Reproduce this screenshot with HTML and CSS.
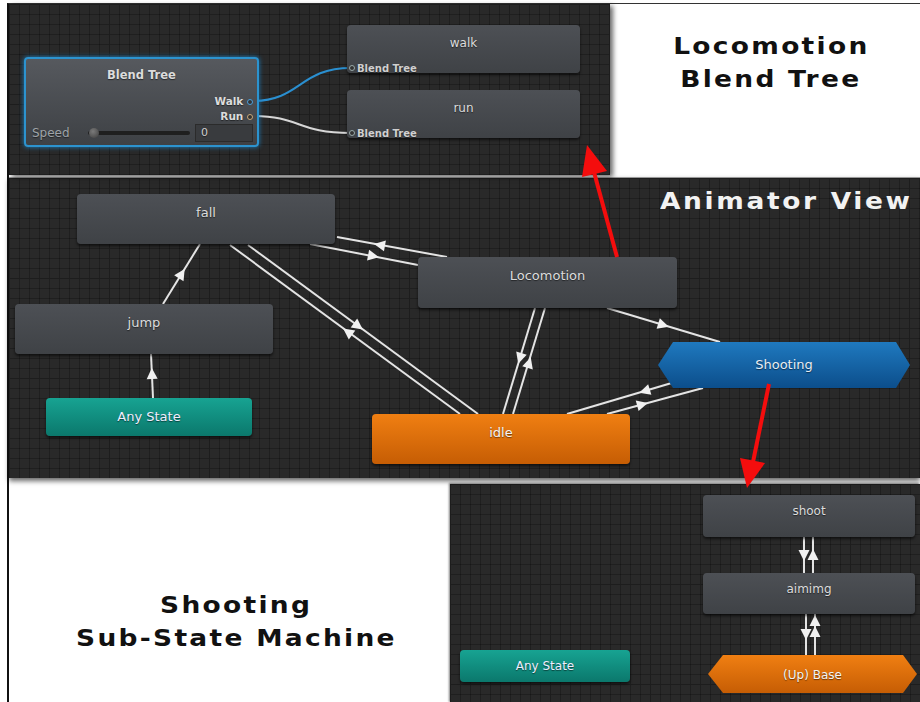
FILE: index.html
```html
<!DOCTYPE html>
<html lang="en">
<head>
  <meta charset="UTF-8">
  <title>Animator View</title>
  <link rel="stylesheet" href="styles.css">
</head>
<body>
  <div class="sheet">
    <div class="frame">

      <!-- 上段: Blend Tree -->
      <div class="row-top">
        <section class="panel grid blend-panel">
          <svg class="wires" width="601" height="171" viewBox="0 0 601 171">
            <path d="M243 97 C292 97 290 64 342 64" stroke="#2a8fd0" stroke-width="2" fill="none"/>
            <path d="M243 112 C292 112 288 129 342 129" stroke="#d6d6d6" stroke-width="2" fill="none"/>
          </svg>

          <div class="node blend">
            <div class="node-title">Blend Tree</div>
            <div class="outs">
              <div>Walk <i class="port port-blue"></i></div>
              <div>Run <i class="port port-warm"></i></div>
            </div>
            <div class="speed-row">
              <span class="speed-label">Speed</span>
              <div class="slider"><i class="knob"></i></div>
              <div class="field">0</div>
            </div>
          </div>

          <div class="node clip n-walk">
            <div class="node-title">walk</div>
            <div class="in-label"><i class="port"></i>Blend Tree</div>
          </div>
          <div class="node clip n-run">
            <div class="node-title">run</div>
            <div class="in-label"><i class="port"></i>Blend Tree</div>
          </div>
        </section>

        <div class="caption caption-top"><span>Locomotion</span><span>Blend Tree</span></div>
      </div>

      <!-- 中段: Animator View -->
      <section class="panel grid view">
        <svg class="wires" width="911" height="300" viewBox="0 0 911 300">
          <defs>
            <path id="tri-a" d="M6 0 L-5 -5.5 L-5 5.5 Z" fill="#f0f0f0"/>
          </defs>
          <g stroke="#e4e4e4" stroke-width="2" fill="none">
            <line x1="154" y1="126" x2="191" y2="66"/>
            <line x1="144" y1="220" x2="142" y2="176"/>
            <line x1="328" y1="59" x2="438" y2="79"/>
            <line x1="301" y1="66" x2="409" y2="87"/>
            <line x1="221" y1="67" x2="451" y2="236"/>
            <line x1="239" y1="67" x2="469" y2="236"/>
            <line x1="526" y1="130" x2="494" y2="236"/>
            <line x1="536" y1="130" x2="504" y2="236"/>
            <line x1="598" y1="130" x2="711" y2="164"/>
            <line x1="558" y1="236" x2="666" y2="204"/>
            <line x1="598" y1="236" x2="694" y2="210"/>
          </g>
          <use href="#tri-a" transform="translate(172.5 96) rotate(-58)"/>
          <use href="#tri-a" transform="translate(143 196) rotate(-92)"/>
          <use href="#tri-a" transform="translate(371 67) rotate(190)"/>
          <use href="#tri-a" transform="translate(364 78) rotate(11)"/>
          <use href="#tri-a" transform="translate(339 154) rotate(216)"/>
          <use href="#tri-a" transform="translate(349 148) rotate(36)"/>
          <use href="#tri-a" transform="translate(511 180) rotate(107)"/>
          <use href="#tri-a" transform="translate(520 185) rotate(-73)"/>
          <use href="#tri-a" transform="translate(654 147) rotate(17)"/>
          <use href="#tri-a" transform="translate(636 213) rotate(163)"/>
          <use href="#tri-a" transform="translate(633 226.5) rotate(-15)"/>
        </svg>

        <div class="view-title">Animator View</div>

        <div class="node n-fall"><div class="node-title">fall</div></div>
        <div class="node n-jump"><div class="node-title">jump</div></div>
        <div class="node n-loco"><div class="node-title">Locomotion</div></div>
        <div class="node teal n-any"><div class="node-title">Any State</div></div>
        <div class="node orange n-idle"><div class="node-title">idle</div></div>
        <div class="node hex blue n-shooting"><div class="node-title">Shooting</div></div>
      </section>

      <!-- 下段: Sub-State Machine -->
      <div class="row-bottom">
        <div class="caption caption-bottom"><span>Shooting</span><span>Sub-State Machine</span></div>

        <section class="panel grid sub">
          <svg class="wires" width="470" height="218" viewBox="0 0 470 218">
            <defs>
              <path id="tri-b" d="M6 0 L-5 -5.5 L-5 5.5 Z" fill="#f0f0f0"/>
            </defs>
            <g stroke="#e4e4e4" stroke-width="2" fill="none">
              <line x1="354" y1="53" x2="354" y2="89"/>
              <line x1="363" y1="53" x2="363" y2="89"/>
              <line x1="356" y1="130" x2="356" y2="171"/>
              <line x1="365" y1="130" x2="365" y2="171"/>
            </g>
            <use href="#tri-b" transform="translate(354 71) rotate(90)"/>
            <use href="#tri-b" transform="translate(363 71) rotate(-90)"/>
            <use href="#tri-b" transform="translate(356 150) rotate(90)"/>
            <use href="#tri-b" transform="translate(365 137) rotate(-90)"/>
            <use href="#tri-b" transform="translate(365 148) rotate(-90)"/>
          </svg>

          <div class="node small n-shoot"><div class="node-title">shoot</div></div>
          <div class="node small n-aim"><div class="node-title">aimimg</div></div>
          <div class="node small teal n-any2"><div class="node-title">Any State</div></div>
          <div class="node small hex orange n-base"><div class="node-title">(Up) Base</div></div>
        </section>
      </div>
    </div>

    <!-- 赤い矢印 -->
    <svg class="callouts" width="920" height="702" viewBox="0 0 920 702">
      <g fill="#f40d0d" stroke="#f40d0d">
        <line x1="617" y1="257" x2="594" y2="172" stroke-width="4"/>
        <polygon points="587,145 607,171 582,177" stroke="none"/>
        <line x1="769" y1="384" x2="753" y2="462" stroke-width="4"/>
        <polygon points="747,488 765,463 740,458" stroke="none"/>
      </g>
    </svg>
  </div>
</body>
</html>
```

FILE: styles.css
```css
body {
  margin: 0;
  background: #fff;
  font-family: "DejaVu Sans", Verdana, sans-serif;
}
.sheet {
  position: relative;
  width: 920px;
  height: 702px;
  overflow: hidden;
  padding: 3px 0 0 7px;
  box-sizing: border-box;
}
.frame {
  height: 699px;
  border-top: 1px solid #333;
  border-left: 2px solid #111;
  display: flex;
  flex-direction: column;
}

/* グリッド背景 */
.grid {
  background-color: #292929;
  background-image:
    linear-gradient(#1d1d1d 1px, transparent 1px),
    linear-gradient(90deg, #1d1d1d 1px, transparent 1px),
    linear-gradient(rgba(0, 0, 0, 0.25) 1px, transparent 1px),
    linear-gradient(90deg, rgba(0, 0, 0, 0.25) 1px, transparent 1px);
  background-size: 100px 100px, 100px 100px, 10px 10px, 10px 10px;
}
.panel {
  position: relative;
  overflow: hidden;
}
.wires {
  position: absolute;
  left: 0;
  top: 0;
}

/* 段 */
.row-top {
  display: flex;
  height: 171px;
}
.blend-panel {
  width: 601px;
  box-shadow: 3px 2px 5px rgba(0, 0, 0, 0.6);
  z-index: 2;
}
.view {
  margin-top: 2px;
  height: 300px;
  box-shadow: 0 3px 5px rgba(0, 0, 0, 0.6);
  border-top: 1px solid #9a9a9a;
  z-index: 1;
}
.row-bottom {
  display: flex;
  margin-top: 6px;
  flex: 1;
}
.sub {
  flex: 1;
  box-shadow: -1px -1px 2px rgba(0, 0, 0, 0.5);
}

/* キャプション (幅広の書体を横に伸ばして近づける) */
.caption {
  display: flex;
  flex-direction: column;
  align-items: center;
  font-weight: bold;
  font-size: 23px;
  letter-spacing: 2px;
  line-height: 33px;
  color: #111;
}
.caption span {
  display: block;
  white-space: nowrap;
  transform: scaleX(1.15);
}
.caption-top {
  flex: 1;
  padding: 26px 0 0 12px;
}
.caption-bottom {
  width: 441px;
  padding-top: 105px;
  padding-left: 14px;
  box-sizing: border-box;
}
.view-title {
  position: absolute;
  left: 651px;
  top: 10px;
  font-weight: bold;
  font-size: 23px;
  letter-spacing: 2.3px;
  color: #f2f2f2;
  white-space: nowrap;
  transform: scaleX(1.15);
  transform-origin: left center;
}

/* ノード */
.node {
  position: absolute;
  box-sizing: border-box;
  display: flex;
  flex-direction: column;
  border-radius: 4px;
  background: linear-gradient(#4d5055, #3f4246);
  box-shadow: 0 2px 3px rgba(0, 0, 0, 0.6);
  color: #dcdcdc;
  font-size: 13px;
  text-shadow: 0 1px 1px rgba(0, 0, 0, 0.5);
}
.node-title {
  padding-top: 12px;
  line-height: 14px;
  text-align: center;
}
.node.small {
  font-size: 12px;
}
.node.small .node-title {
  padding-top: 9px;
}
.teal {
  background: linear-gradient(#17a392, #0b786c);
  color: #eef;
}
.orange {
  background: linear-gradient(#f07f12, #c65d04);
  color: #f4f4f4;
}
.blue {
  background: linear-gradient(#1f79bf, #0c4e8b);
  color: #e8eef4;
}
.hex {
  border-radius: 0;
  justify-content: center;
  clip-path: polygon(15px 0, calc(100% - 14px) 0, 100% 50%, calc(100% - 14px) 100%, 15px 100%, 0 50%);
}
.hex .node-title,
.node.small.hex .node-title {
  padding-top: 0;
}
.n-fall { left: 68px; top: 16px; width: 258px; height: 50px; }
.n-jump { left: 6px; top: 126px; width: 258px; height: 50px; }
.n-loco { left: 409px; top: 79px; width: 259px; height: 51px; }
.n-any { left: 37px; top: 220px; width: 206px; height: 38px; }
.n-idle { left: 363px; top: 236px; width: 258px; height: 50px; }
.n-shooting { left: 649px; top: 164px; width: 252px; height: 46px; }

.n-shoot { left: 253px; top: 11px; width: 212px; height: 42px; }
.n-aim { left: 253px; top: 89px; width: 212px; height: 41px; }
.n-any2 { left: 10px; top: 166px; width: 170px; height: 32px; }
.n-base { left: 258px; top: 171px; width: 209px; height: 38px; }
.n-base .node-title { padding-top: 0; margin-top: 2px; }

/* Blend Tree ノード */
.blend {
  left: 15px;
  top: 53px;
  width: 235px;
  height: 90px;
  border: 2px solid #2c93cf;
  box-shadow: 0 0 5px #1d7fbf;
  background: linear-gradient(#56595e, #3e4145);
  font-size: 12px;
}
.blend .node-title {
  padding-top: 9px;
  font-weight: bold;
  font-size: 11.5px;
}
.outs {
  margin-top: 12px;
  padding-right: 4px;
  text-align: right;
  font-size: 10.5px;
  font-weight: bold;
  line-height: 15px;
}
.port {
  display: inline-block;
  width: 4px;
  height: 4px;
  border-radius: 50%;
  border: 1px solid #9aa;
  background: #333;
  vertical-align: middle;
}
.port-blue { border-color: #4aa0dc; }
.port-warm { border-color: #c9a878; }
.speed-row {
  margin-top: auto;
  height: 18px;
  padding: 0 4px 4px 6px;
  display: flex;
  align-items: center;
  gap: 6px;
}
.speed-label {
  width: 50px;
  color: #9ea3a8;
  font-size: 12px;
}
.slider {
  width: 102px;
  height: 4px;
  border-radius: 2px;
  background: #1f1f1f;
  display: flex;
  align-items: center;
}
.knob {
  width: 10px;
  height: 10px;
  border-radius: 50%;
  margin-left: 1px;
  background: radial-gradient(circle at 40% 35%, #7a7a7a, #3c3c3c);
}
.field {
  width: 58px;
  height: 18px;
  box-sizing: border-box;
  margin-left: -1px;
  padding-left: 5px;
  background: #393b3e;
  border: 1px solid #2b2b2b;
  color: #cfcfcf;
  font-size: 11px;
  line-height: 16px;
}

/* walk / run */
.clip {
  font-size: 12px;
}
.clip .node-title {
  padding-top: 11px;
}
.n-walk { left: 338px; top: 21px; width: 233px; height: 48px; }
.n-run { left: 338px; top: 86px; width: 233px; height: 48px; }
.in-label {
  margin-top: auto;
  padding-left: 2px;
  display: flex;
  align-items: center;
  gap: 2px;
  height: 10px;
  font-size: 10px;
  font-weight: bold;
  color: #d0d0d0;
}

/* 赤い矢印 */
.callouts {
  position: absolute;
  left: 0;
  top: 0;
  z-index: 5;
  pointer-events: none;
}
```
